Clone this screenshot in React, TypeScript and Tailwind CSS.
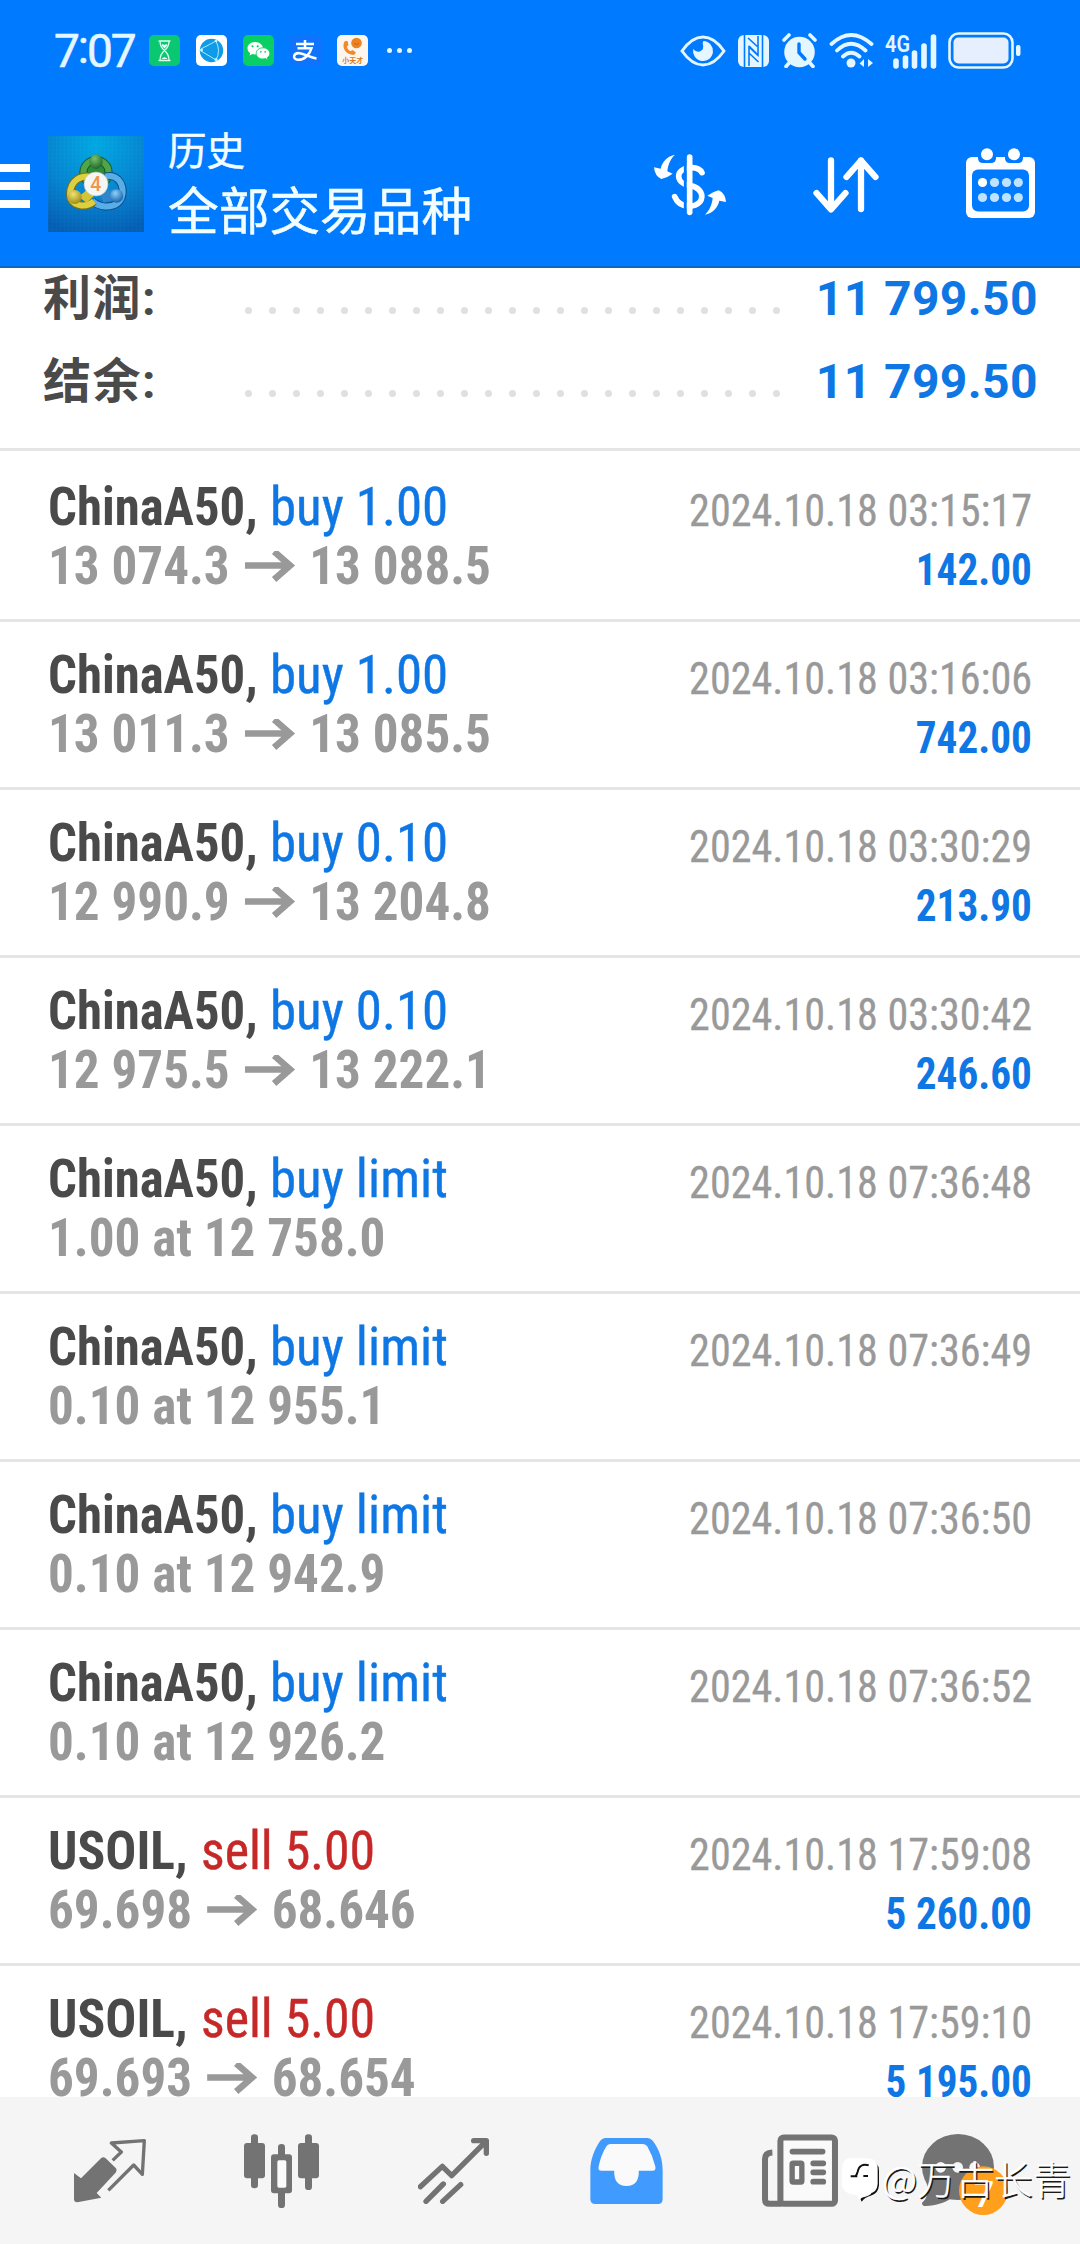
type Deal = {
  symbol: string;
  action: string;
  sell?: boolean;
  from: string;
  to?: string;
  time: string;
  profit?: string;
};

const deals: Deal[] = [
  { symbol: "ChinaA50", action: "buy 1.00", from: "13 074.3", to: "13 088.5", time: "2024.10.18 03:15:17", profit: "142.00" },
  { symbol: "ChinaA50", action: "buy 1.00", from: "13 011.3", to: "13 085.5", time: "2024.10.18 03:16:06", profit: "742.00" },
  { symbol: "ChinaA50", action: "buy 0.10", from: "12 990.9", to: "13 204.8", time: "2024.10.18 03:30:29", profit: "213.90" },
  { symbol: "ChinaA50", action: "buy 0.10", from: "12 975.5", to: "13 222.1", time: "2024.10.18 03:30:42", profit: "246.60" },
  { symbol: "ChinaA50", action: "buy limit", from: "1.00 at 12 758.0", time: "2024.10.18 07:36:48" },
  { symbol: "ChinaA50", action: "buy limit", from: "0.10 at 12 955.1", time: "2024.10.18 07:36:49" },
  { symbol: "ChinaA50", action: "buy limit", from: "0.10 at 12 942.9", time: "2024.10.18 07:36:50" },
  { symbol: "ChinaA50", action: "buy limit", from: "0.10 at 12 926.2", time: "2024.10.18 07:36:52" },
  { symbol: "USOIL", action: "sell 5.00", sell: true, from: "69.698", to: "68.646", time: "2024.10.18 17:59:08", profit: "5 260.00" },
  { symbol: "USOIL", action: "sell 5.00", sell: true, from: "69.693", to: "68.654", time: "2024.10.18 17:59:10", profit: "5 195.00" },
];

function StatusBar() {
  return (
    <div className="flex h-[101px] items-center pl-[54px] pr-[59px] text-[#e4f6ff]">
      <div className="w-[95px] whitespace-nowrap text-[46px] leading-[46px] tracking-[-2px] [-webkit-text-stroke:0.6px_currentColor]">
        7<span className="relative -top-1">:</span>07
      </div>
      <div className="flex items-center gap-4">
        <svg className="size-[31px]" viewBox="0 0 31 31">
          <rect width="31" height="31" rx="5" fill="#0ac871" />
          <path d="M10 6h11M10 25.500h11M11 6c0 5 1.500 7 4.500 9.500C18.500 13 20 11 20 6M11 25.500c0-5 1.500-7.500 4.500-10 3 2.500 4.500 5 4.500 10" fill="none" stroke="#d8fff0" strokeWidth="1.300" strokeLinecap="round" />
          <path d="M15.500 13.500l-2.800-3q0-2 2.800-.6 2.800-1.400 2.800.6zM12.500 24q3-3.500 6 0z" fill="#fff" />
        </svg>
        <svg className="size-[31px]" viewBox="0 0 31 31">
          <rect width="31" height="31" rx="5" fill="#fff" />
          <circle cx="15.500" cy="15.500" r="11.700" fill="#109be8" />
          <path d="M5 14L20 6M5 16l15 9M20 6q5 10 0 19" fill="none" stroke="#a8ecff" strokeWidth="1" />
          <circle cx="5.500" cy="15" r="1.500" fill="#c8f4ff" />
          <circle cx="20" cy="6" r="1.300" fill="#c8f4ff" />
          <circle cx="20" cy="24.500" r="1.500" fill="#c8f4ff" />
        </svg>
        <svg className="size-[31px]" viewBox="0 0 31 31">
          <rect width="31" height="31" rx="5" fill="#07cf63" />
          <path d="M12 7C7.500 7 4.500 10 4.500 13.300c0 2 1 3.700 2.700 4.900L6.500 20.500l3-1.500q1.200.4 2.500.4C16.500 19.400 20 17 20 13.300 20 10 16.500 7 12 7z" fill="#fff" />
          <path d="M20 12.800c-3.800 0-6.800 2.400-6.800 5.600s3 5.600 6.800 5.600q1.200 0 2.300-.4l2.600 1.400-.7-2.200c1.600-1 2.600-2.600 2.600-4.400 0-3.200-3-5.600-6.800-5.600z" fill="#fff" stroke="#07cf63" strokeWidth=".9" />
          <g fill="#07cf63">
            <circle cx="9.500" cy="11.300" r="1.100" />
            <circle cx="14.700" cy="11.300" r="1.100" />
            <circle cx="17.800" cy="16.800" r=".9" />
            <circle cx="22.200" cy="16.800" r=".9" />
          </g>
        </svg>
        <svg className="size-[31px]" viewBox="0 0 31 31">
          <rect width="31" height="31" rx="5" fill="#0f73fd" />
          <path d="M6 9h18M15 5v8M7.500 13.300h14C20 19 14 25.500 7.500 24.800 2 24 3.500 17.500 9.500 18.200 15 19 20 22.500 26.500 23.500" fill="none" stroke="#fff" strokeWidth="2.500" />
        </svg>
        <svg className="size-[31px]" viewBox="0 0 31 31">
          <rect width="31" height="31" rx="5" fill="#fdf6f0" />
          <path d="M8 6c-4 5 0 14 9 14l2-2.500-3.500-2.500-2 1.200C11 15 10 13 10 11.200l1.500-1L10.500 6z" fill="#f08a24" />
          <circle cx="19.500" cy="8" r="5.300" fill="#ec8322" />
          <path d="M17 8.500q2.500 2 5 0" fill="none" stroke="#b8600f" strokeWidth=".8" />
          <text x="15.800" y="28" fontSize="7" fontWeight="700" textAnchor="middle" fill="#d97a20">小天才</text>
        </svg>
        <div className="ml-[3px] flex gap-[5px]">
          <i className="size-[5px] rounded-full bg-[#e4f6ff]" />
          <i className="size-[5px] rounded-full bg-[#e4f6ff]" />
          <i className="size-[5px] rounded-full bg-[#e4f6ff]" />
        </div>
      </div>
      <div className="ml-auto flex items-center">
        <svg className="h-8 w-[46px]" viewBox="0 0 46 32">
          <path d="M2 16C9 6 16 2 23 2s14 4 21 14C37 26 30 30 23 30S9 26 2 16z" fill="none" stroke="currentColor" strokeWidth="3" />
          <path d="M23.500 6a10 10 0 1 1-10.300 8q3 3.500 6.500 2.500 5-2 3-8 0-1.500.8-2.500z" fill="currentColor" />
        </svg>
        <svg className="ml-3 h-8 w-[31px]" viewBox="0 0 31 32">
          <rect width="31" height="32" rx="6" fill="currentColor" />
          <path d="M6.500 0v32M24.500 0v32" stroke="#007aff" strokeWidth="1.600" />
          <path d="M11 31V12l9.500 9M20 1v19L11 11M11 18l9.500 9M10 3l10 9" fill="none" stroke="#007aff" strokeWidth="1.600" />
        </svg>
        <svg className="ml-[13px] h-[35px] w-[35px]" viewBox="0 0 35 35">
          <circle cx="17.500" cy="19" r="15.300" fill="currentColor" />
          <path d="M2 7l5-5M33 7l-5-5M7 30l-3 3.500M28 30l3 3.500" stroke="currentColor" strokeWidth="3.600" strokeLinecap="round" />
          <path d="M17 11v8.500l6 6.500" fill="none" stroke="#007aff" strokeWidth="3.400" strokeLinecap="round" />
        </svg>
        <svg className="ml-3 h-[35px] w-[45px]" viewBox="0 0 45 35" fill="none" stroke="currentColor" strokeWidth="3.800" strokeLinecap="round">
          <path d="M2.500 11Q22 -7 42.500 11M8 17.500Q22 4 36.500 17.500M14 23.500Q22 16 30.500 23.500" />
          <circle cx="22" cy="30" r="4.500" fill="currentColor" stroke="none" />
          <path d="M35 26v8l-4.500-3.500zM39 34v-8l5 4z" fill="currentColor" stroke="none" />
        </svg>
        <svg className="ml-[11px] h-[36px] w-[52px] overflow-visible" viewBox="0 0 52 36">
          <text x="0" y="18.500" fontSize="24" fontWeight="600" fill="currentColor" textLength="25" lengthAdjust="spacingAndGlyphs">4G</text>
          <path d="M11 28v5M20.500 25v8M29.500 20v13M39 13v20M48.500 4v29" stroke="currentColor" strokeWidth="5.600" strokeLinecap="round" />
        </svg>
        <svg className="ml-[11px] h-[37px] w-[73px]" viewBox="0 0 73 37">
          <rect x="1.500" y="1.500" width="63" height="34" rx="9" fill="none" stroke="currentColor" strokeWidth="2.600" />
          <rect x="5.500" y="5.500" width="55" height="26" rx="5" fill="#e6effd" />
          <rect x="68" y="13" width="4.500" height="11" rx="2" fill="currentColor" />
        </svg>
      </div>
    </div>
  );
}

function AppLogo() {
  return (
    <svg className="ml-[18px] size-24" viewBox="24 20 288 288">
      <defs>
        <radialGradient id="bg" cx=".5" cy=".1" r=".95">
          <stop offset="0" stopColor="#00a8e2" />
          <stop offset=".55" stopColor="#0584d0" />
          <stop offset="1" stopColor="#045eb4" />
        </radialGradient>
        <pattern id="grid" width="12" height="12" patternUnits="userSpaceOnUse">
          <path d="M12 0H0v12" fill="none" stroke="#fff" strokeOpacity=".05" strokeWidth="2" />
        </pattern>
        <radialGradient id="g" cx=".4" cy=".3" r=".7">
          <stop offset="0" stopColor="#7cc06a" />
          <stop offset="1" stopColor="#1d6a2c" />
        </radialGradient>
        <radialGradient id="y" cx=".4" cy=".3" r=".7">
          <stop offset="0" stopColor="#efe276" />
          <stop offset="1" stopColor="#a08d14" />
        </radialGradient>
        <radialGradient id="b" cx=".4" cy=".3" r=".7">
          <stop offset="0" stopColor="#8fd0f6" />
          <stop offset="1" stopColor="#1565b0" />
        </radialGradient>
      </defs>
      <rect x="24" y="20" width="288" height="288" fill="url(#bg)" />
      <rect x="24" y="20" width="288" height="288" fill="url(#grid)" />
      <circle cx="168" cy="130" r="38" fill="#2f8a3a" stroke="#165a28" strokeWidth="24" />
      <circle cx="168" cy="130" r="38" fill="none" stroke="#4fa548" strokeWidth="18" />
      <path d="M156 214C180 236 212 236 232 222C252 206 254 172 234 150C224 140 208 138 196 142" fill="none" stroke="#0d4d90" strokeWidth="24" />
      <path d="M156 214C180 236 212 236 232 222C252 206 254 172 234 150C224 140 208 138 196 142" fill="none" stroke="#5aaee6" strokeWidth="18" />
      <path d="M180 190L222 178L232 210L190 220Z" fill="#2f86cc" />
      <path d="M150 142C108 136 84 170 92 208c14 26 50 26 70 8" fill="none" stroke="#7c7112" strokeWidth="24" />
      <path d="M150 142C108 136 84 170 92 208c14 26 50 26 70 8" fill="none" stroke="#ddd040" strokeWidth="18" />
      <path d="M112 200q26-8 30-26l22 24-24 22z" fill="#d2c434" />
      <ellipse cx="168" cy="97" rx="20" ry="22" fill="url(#g)" />
      <circle cx="104" cy="203" r="21" fill="url(#y)" />
      <circle cx="230" cy="200" r="20" fill="url(#b)" />
      <circle cx="168" cy="164" r="36" fill="#f6f6f4" stroke="#b9c0b4" strokeWidth="2" />
      <text x="167" y="184" fontSize="58" fontWeight="500" textAnchor="middle" fill="#f0954a">4</text>
    </svg>
  );
}

function Toolbar() {
  return (
    <div className="flex h-[167px] items-center border-b-2 border-[#0d68c4] pr-[45px] text-white">
      <div className="mt-[5px] flex w-[30px] flex-col gap-2.5">
        <i className="h-2 bg-white" />
        <i className="h-2 bg-white" />
        <i className="h-2 bg-white" />
      </div>
      <AppLogo />
      <div className="mt-[3px] ml-6 flex flex-col font-['Noto_Sans_CJK_SC',sans-serif] text-[#f2fdff] [-webkit-text-stroke:0.5px_currentColor]">
        <span className="text-[38.5px] leading-[46px]">历史</span>
        <span className="text-[50.7px] leading-[74px]">全部交易品种</span>
      </div>
      <svg className="mt-0.5 ml-auto h-[62px] w-[72px]" viewBox="42 42 216 186">
        <path d="M186 98C178 82 160 82 149 83C105 88 105 128 149 137C195 142 200 195 149 199C125 199 112 190 104 170" fill="none" stroke="#fff" strokeWidth="17" strokeLinecap="round" />
        <path d="M136 60V215" stroke="#007aff" strokeWidth="9" />
        <path d="M149 51V217" stroke="#fff" strokeWidth="17" strokeLinecap="round" />
        <path id="swap" d="M105 44C82 48 66 66 62 86L42 82Q44 108 64 117Q84 112 98 101L82 94C84 74 92 56 105 44Z" fill="#fff" />
        <use href="#swap" transform="rotate(180 150 134)" />
      </svg>
      <svg className="mt-0.5 ml-[87px] h-14 w-[66px]" viewBox="813 157 66 56" fill="none" stroke="#fff" strokeWidth="6.300" strokeLinecap="round" strokeLinejoin="round">
        <path d="M831 160.500V209M816.500 193L831 209.500L845.500 193M861 209V160.500M846.500 177L861 160.500L875.500 177" />
      </svg>
      <svg className="ml-[87px] h-[71px] w-[69px]" viewBox="966 149 69 71">
        <rect x="966" y="158" width="69" height="61" rx="6" fill="#fff" />
        <rect x="972" y="170.500" width="57" height="42" rx="6" fill="#007aff" />
        <path d="M978 149h18v10q0 5-5 5h-8q-5 0-5-5zM1005 149h18v10q0 5-5 5h-8q-5 0-5-5z" fill="#007aff" />
        <circle cx="987" cy="155.300" r="6" fill="#fff" />
        <circle cx="1014" cy="155.300" r="6" fill="#fff" />
        <circle cx="982.500" cy="183.500" r="4.600" fill="#fff" />
        <g fill="#bfe2ff">
          <circle cx="994.500" cy="183.500" r="4.600" />
          <circle cx="1006.500" cy="183.500" r="4.600" />
          <circle cx="1018.300" cy="183.500" r="4.600" />
          <circle cx="982.500" cy="198.500" r="4.600" />
          <circle cx="994.500" cy="198.500" r="4.600" />
          <circle cx="1006.500" cy="198.500" r="4.600" />
          <circle cx="1018.300" cy="198.500" r="4.600" />
        </g>
      </svg>
    </div>
  );
}

function SummaryLine({ label, value }: { label: string; value: string }) {
  return (
    <div className="flex h-[83px] justify-between px-[42px] text-[48px] font-bold leading-[83px]">
      <span className="w-[203px] pl-px tracking-[1.5px] text-[#4a4a4a]">{label}</span>
      <div className="mt-[50px] flex gap-[17px]">
        {Array.from({ length: 23 }, (_, i) => (
          <i key={i} className="size-[7px] rounded-full bg-[#e0e0e0]" />
        ))}
      </div>
      <span className="ml-auto tracking-[0.4px] text-[#0f77e4]">{value}</span>
    </div>
  );
}

function DealRow({ deal }: { deal: Deal }) {
  return (
    <div className="h-[168px] shrink-0 border-b-[3px] border-[#e5e5e5] px-12 pt-[23px] font-['Roboto_Condensed','Roboto',sans-serif] leading-[59px]">
      <div className="flex h-[59px] items-baseline justify-between">
        <div className="flex items-baseline whitespace-pre text-[54px]">
          {deal.sell ? (
            <>
              <span className="origin-left scale-x-[.955] font-bold text-[#4a4a4a]">{deal.symbol},</span>
              <span className="ml-[7px] origin-left scale-x-[.96] text-[#c62828] [-webkit-text-stroke:0.4px_currentColor]">{deal.action}</span>
            </>
          ) : (
            <>
              <span className="origin-left scale-x-[.94] font-bold text-[#4a4a4a]">{deal.symbol},</span>
              <span className="-ml-px origin-left scale-x-[.98] text-[#0f77e4] [-webkit-text-stroke:0.4px_currentColor]">{deal.action}</span>
            </>
          )}
        </div>
        <div className="origin-right translate-y-px scale-x-[.937] text-[45px] text-[#999] [-webkit-text-stroke:0.3px_currentColor]">{deal.time}</div>
      </div>
      <div className="flex h-[59px] items-baseline justify-between font-bold">
        <div className="flex origin-left scale-x-[.947] items-baseline text-[54px] text-[#999]">
          <span>{deal.from}</span>
          {deal.to && (
            <>
              <svg className="mr-[15px] ml-[16px] h-[33px] w-[53px]" viewBox="0 0 50 33" preserveAspectRatio="none">
                <path d="M0 14.500H44M29 .5L45 14.500L29 28.500" fill="none" stroke="currentColor" strokeWidth="6.500" />
              </svg>
              <span>{deal.to}</span>
            </>
          )}
        </div>
        {deal.profit && (
          <div className="origin-right translate-y-px scale-x-[.915] text-[45px] text-[#0f77e4]">{deal.profit}</div>
        )}
      </div>
    </div>
  );
}

function BottomNav() {
  return (
    <div className="grid h-[147px] shrink-0 grid-cols-6 place-items-center bg-[#f5f5f5] px-6 text-[#737373]">
      <svg className="h-16 w-[72px]" viewBox="222 236 216 192">
        <path d="M222 338L243 354L303 294Q310 288 317 294L348 324Q352 330 348 336L290 398L304 412L232 426Q222 426 222 416Z" fill="currentColor" />
        <path d="M338 300L364 275L334 248L433 241L427 342L401 314L325 390" fill="none" stroke="currentColor" strokeWidth="10" strokeLinejoin="round" />
      </svg>
      <svg className="mr-0.5 h-[74px] w-[75px]" viewBox="732 218 225 222" fill="currentColor">
        <rect x="732" y="245" width="63" height="106" rx="9" />
        <rect x="753" y="219" width="21" height="162" rx="10" />
        <rect x="834" y="248" width="21" height="192" rx="10" />
        <rect x="813" y="279" width="63" height="117" rx="9" />
        <rect x="832" y="297" width="27" height="82" rx="5" fill="#fafafa" />
        <rect x="894" y="245" width="63" height="106" rx="9" />
        <rect x="915" y="219" width="21" height="167" rx="10" />
      </svg>
      <svg className="mr-px h-[66px] w-[71px]" viewBox="174 228 213 198" fill="none" stroke="currentColor" strokeWidth="16" strokeLinecap="round" strokeLinejoin="round">
        <path d="M181 374L247 313L275 341L378 238M341 236H379V274M198 418L250 366M248 418L302 368" />
      </svg>
      <svg className="h-[66px] w-[73px]" viewBox="690 228 218 199">
        <path d="M735 228H862Q872 228 878 236C898 262 908 292 908 325V412Q908 427 894 427H705Q690 427 690 412V325C690 292 702 262 720 236Q726 228 735 228Z" fill="#419bff" />
        <path d="M750 246H848Q858 246 862 254Q878 282 886 314Q888 327 878 327H836Q838 372 799 373Q760 372 762 327H724Q712 327 715 314Q722 280 738 254Q742 246 750 246Z" fill="#fafafa" />
      </svg>
      <svg className="ml-1 h-[73px] w-[76px]" viewBox="127 218 227 217" fill="none" stroke="currentColor">
        <rect x="182" y="228" width="163" height="198" rx="10" strokeWidth="18" fill="#fafafa" />
        <path d="M158 273Q136 274 136 292V412Q136 426 150 426H185" strokeWidth="18" />
        <path d="M218 270H308M280 305H310M280 332H310M280 360H310" strokeWidth="17" strokeLinecap="round" />
        <rect x="217" y="305" width="29" height="56" rx="3" strokeWidth="16" />
      </svg>
      <svg className="h-[88px] w-24" viewBox="606 198 288 264">
        <ellipse cx="714" cy="318" rx="108" ry="99" fill="currentColor" />
        <path d="M618 360Q632 404 606 425Q606 435 616 435C650 434 676 425 694 412Z" fill="currentColor" />
        <circle cx="662" cy="319" r="16" fill="#f5f5f5" />
        <circle cx="713" cy="319" r="16" fill="#f5f5f5" />
        <circle cx="764" cy="319" r="16" fill="#f5f5f5" />
        <circle cx="790" cy="389" r="73" fill="#ff9f1c" />
        <text x="792" y="437" fontSize="108" fontWeight="500" textAnchor="middle" fill="#fff">7</text>
      </svg>
    </div>
  );
}

function Watermark() {
  return (
    <div className="absolute right-[9px] bottom-[37px] flex items-center gap-1 text-white">
      <svg className="mt-1 h-[45px] w-9 overflow-visible" viewBox="28 132 108 135">
        <path d="M52 142H108Q135 144 135 170V214Q133 240 110 245Q92 249 83 263L78 252Q110 246 112 238Z" fill="#111" transform="translate(4 3)" />
        <path d="M52 136H108Q135 138 135 168V213Q133 238 110 242Q90 247 80 262L74 246Q30 245 28 213V168Q29 137 52 136Z" fill="#fff" />
        <path d="M108 157Q80 150 75 176Q73 184 68 190M54 190H74M92 189H106" fill="none" stroke="#111" strokeWidth="6" />
      </svg>
      <span className="font-['Noto_Sans_CJK_SC',sans-serif] text-[38.5px] font-light leading-[60px] [-webkit-text-stroke:0.4px_white] [text-shadow:1.5px_1.5px_0_#1a1a1a]">
        @万古长青
      </span>
    </div>
  );
}

export default function App() {
  return (
    <div className="relative flex h-[2244px] w-[1080px] flex-col overflow-hidden bg-white font-['Roboto','Noto_Sans_CJK_SC',sans-serif]">
      <header className="z-10 shrink-0 bg-[#007aff]">
        <StatusBar />
        <Toolbar />
      </header>
      <main className="min-h-0 flex-1 overflow-hidden">
        <div className="-mt-[11px] mb-[3px] border-b-[3px] border-[#e5e5e5] pb-[25px]">
          <SummaryLine label="利润:" value="11 799.50" />
          <SummaryLine label="结余:" value="11 799.50" />
        </div>
        {deals.map((deal) => (
          <DealRow key={deal.time} deal={deal} />
        ))}
      </main>
      <BottomNav />
      <Watermark />
    </div>
  );
}
